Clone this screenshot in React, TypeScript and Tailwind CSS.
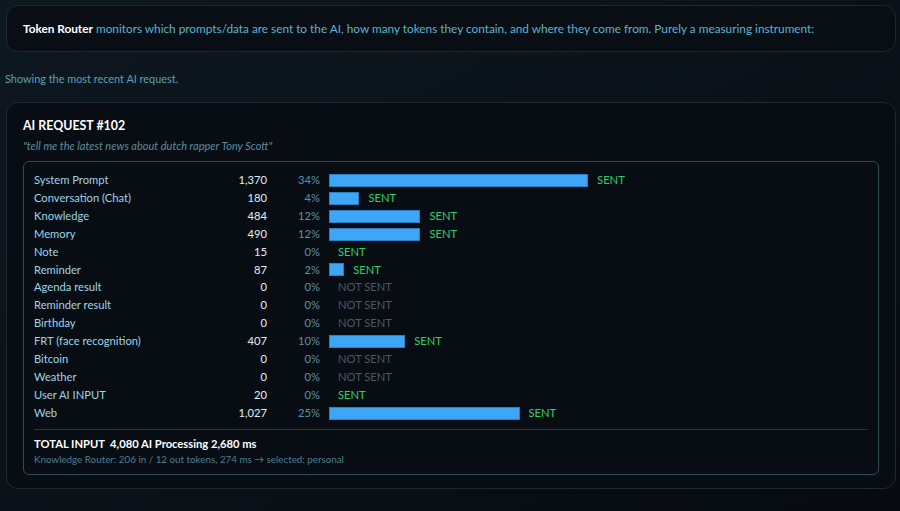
const rows: { label: string; tokens: string; pct: number; sent: boolean }[] = [
  { label: 'System Prompt', tokens: '1,370', pct: 34, sent: true },
  { label: 'Conversation (Chat)', tokens: '180', pct: 4, sent: true },
  { label: 'Knowledge', tokens: '484', pct: 12, sent: true },
  { label: 'Memory', tokens: '490', pct: 12, sent: true },
  { label: 'Note', tokens: '15', pct: 0, sent: true },
  { label: 'Reminder', tokens: '87', pct: 2, sent: true },
  { label: 'Agenda result', tokens: '0', pct: 0, sent: false },
  { label: 'Reminder result', tokens: '0', pct: 0, sent: false },
  { label: 'Birthday', tokens: '0', pct: 0, sent: false },
  { label: 'FRT (face recognition)', tokens: '407', pct: 10, sent: true },
  { label: 'Bitcoin', tokens: '0', pct: 0, sent: false },
  { label: 'Weather', tokens: '0', pct: 0, sent: false },
  { label: 'User AI INPUT', tokens: '20', pct: 0, sent: true },
  { label: 'Web', tokens: '1,027', pct: 25, sent: true },
];

function TokenRow({ label, tokens, pct, sent }: (typeof rows)[number]) {
  return (
    <div className="grid h-[17.92px] grid-cols-[160px_73px_53px_1fr] items-center text-[11.2px]">
      <span className="text-[#9fd3e6]">{label}</span>
      <span className="text-right text-[#e4edf1]">{tokens}</span>
      <span className="text-right text-[#5f8f9f]">{pct}%</span>
      <div className="flex items-center pl-[9px]">
        <div
          className={`mr-[9px] h-[13px] bg-[#3ea6f7] ${pct > 0 ? 'border border-[#2a7fc4]' : ''}`}
          style={{ width: pct * 7.62 }}
        />
        <span className={sent ? 'text-[#2fcf6a]' : 'text-[#475a63]'}>{sent ? 'SENT' : 'NOT SENT'}</span>
      </div>
    </div>
  );
}

export default function App() {
  return (
    <div
      className="min-h-[511px] bg-gradient-to-br from-[#0e1821] to-[#070b10] pl-[6px] pr-[4px] pt-[5px] pb-6"
      style={{ fontFamily: '"Segoe UI", Lato, sans-serif' }}
    >
      <div className="whitespace-nowrap rounded-xl border border-[#1b2932] bg-[#090e15] px-4 py-[14px] text-[11.8px] leading-[17px] text-[#5cb3cf]">
        <span className="font-bold text-white">Token Router</span> monitors which prompts/data are sent to the AI, how
        many tokens they contain, and where they come from. Purely a measuring instrument:
      </div>

      <p className="-ml-px mt-[19px] text-[10.9px] text-[#5aa0b4]">Showing the most recent AI request.</p>

      <section className="mt-[15px] rounded-xl border border-[#1b2932] bg-[#080d14] px-4 pt-[14px] pb-[13px]">
        <h2 className="text-[12.4px] font-bold text-white">AI REQUEST #102</h2>
        <p className="mt-[2px] text-[11px] italic text-[#5d8c9a]">"tell me the latest news about dutch rapper Tony Scott"</p>

        <div className="mt-[7px] rounded-md border border-[#2b4b59] px-[10px] pt-[9px] pb-[7px]">
          {rows.map((r) => (
            <TokenRow key={r.label} {...r} />
          ))}
          <div className="mt-[7px] border-t border-[#1f3541]" />
          <div className="mt-[6px] text-[11.2px] font-bold text-white">
            TOTAL INPUT&nbsp; 4,080 AI Processing 2,680 ms
          </div>
          <div className="-mt-px text-[9.8px] text-[#4f7f8e]">
            Knowledge Router: 206 in / 12 out tokens, 274 ms → selected: personal
          </div>
        </div>
      </section>
    </div>
  );
}
